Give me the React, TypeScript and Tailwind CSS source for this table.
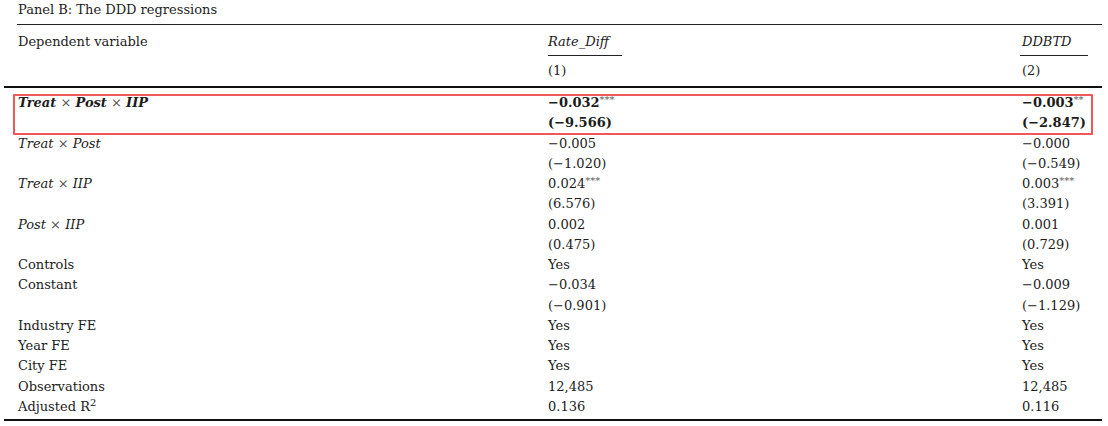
const X = () => <span className="not-italic font-normal text-[#555]"> × </span>;

type Row = { label: React.ReactNode; c1: React.ReactNode; c2: React.ReactNode; bold?: boolean };

const Stars = ({ n }: { n: string }) => (
  <span className="align-top text-[10px] leading-[14px] font-normal text-[#5a5a5a]">{n}</span>
);

const rows: Row[] = [
  {
    label: (
      <span className="italic font-bold">
        Treat<X />Post<X />IIP
      </span>
    ),
    c1: <>−0.032<Stars n="***" /></>,
    c2: <>−0.003<Stars n="**" /></>,
    bold: true,
  },
  { label: "", c1: "(−9.566)", c2: "(−2.847)", bold: true },
  { label: <span className="italic">Treat<X />Post</span>, c1: "−0.005", c2: "−0.000" },
  { label: "", c1: "(−1.020)", c2: "(−0.549)" },
  { label: <span className="italic">Treat<X />IIP</span>, c1: <>0.024<Stars n="***" /></>, c2: <>0.003<Stars n="***" /></> },
  { label: "", c1: "(6.576)", c2: "(3.391)" },
  { label: <span className="italic">Post<X />IIP</span>, c1: "0.002", c2: "0.001" },
  { label: "", c1: "(0.475)", c2: "(0.729)" },
  { label: "Controls", c1: "Yes", c2: "Yes" },
  { label: "Constant", c1: "−0.034", c2: "−0.009" },
  { label: "", c1: "(−0.901)", c2: "(−1.129)" },
  { label: "Industry FE", c1: "Yes", c2: "Yes" },
  { label: "Year FE", c1: "Yes", c2: "Yes" },
  { label: "City FE", c1: "Yes", c2: "Yes" },
  { label: "Observations", c1: "12,485", c2: "12,485" },
  {
    label: (
      <>
        Adjusted R<span className="align-top text-[10px] leading-[12px]">2</span>
      </>
    ),
    c1: "0.136",
    c2: "0.116",
  },
];

export default function App() {
  return (
    <div
      className="w-[1108px] h-[426px] bg-white text-[#1c1c1c] text-[13px] overflow-hidden"
      style={{ fontFamily: '"DejaVu Serif", serif' }}
    >
      <div className="h-[20px] leading-[20px] pl-[18px]">Panel B: The DDD regressions</div>
      <div className="ml-[17px] mr-[6px] mt-[4px] h-[1px] bg-[#222]" />

      {/* header */}
      <div className="grid grid-cols-[530px_474px_1fr] pl-[18px] mt-[7px]">
        <div className="h-[20px] leading-[20px]">Dependent variable</div>
        <div className="h-[20px] leading-[20px] italic">Rate_Diff</div>
        <div className="h-[20px] leading-[20px] italic">DDBTD</div>
        <div />
        <div className="pt-[3px]">
          <div className="w-[74px] h-[1px] bg-[#222]" />
        </div>
        <div className="pt-[3px] -ml-[2px]">
          <div className="w-[68px] h-[1px] bg-[#222]" />
        </div>
        <div />
        <div className="h-[20px] leading-[20px] mt-[5px]">(1)</div>
        <div className="h-[20px] leading-[20px] mt-[5px]">(2)</div>
      </div>
      <div className="ml-[4px] mr-[6px] mt-[5px] h-[2px] bg-[#111]" />

      {/* body */}
      <div className="relative mt-[5px]">
        {rows.map((r, i) => (
          <div
            key={i}
            className={`grid grid-cols-[530px_474px_1fr] pl-[18px] h-[20.27px] leading-[20px] ${r.bold ? "font-bold" : ""}`}
          >
            <div>{r.label}</div>
            <div>{r.c1}</div>
            <div>{r.c2}</div>
          </div>
        ))}
        <div className="absolute left-[13px] top-[1px] w-[1080px] h-[41px] border-2 border-[#f0575a] rounded-[1px]" />
      </div>
      <div className="ml-[4px] mr-[6px] mt-[2px] h-[2px] bg-[#111]" />
    </div>
  );
}
